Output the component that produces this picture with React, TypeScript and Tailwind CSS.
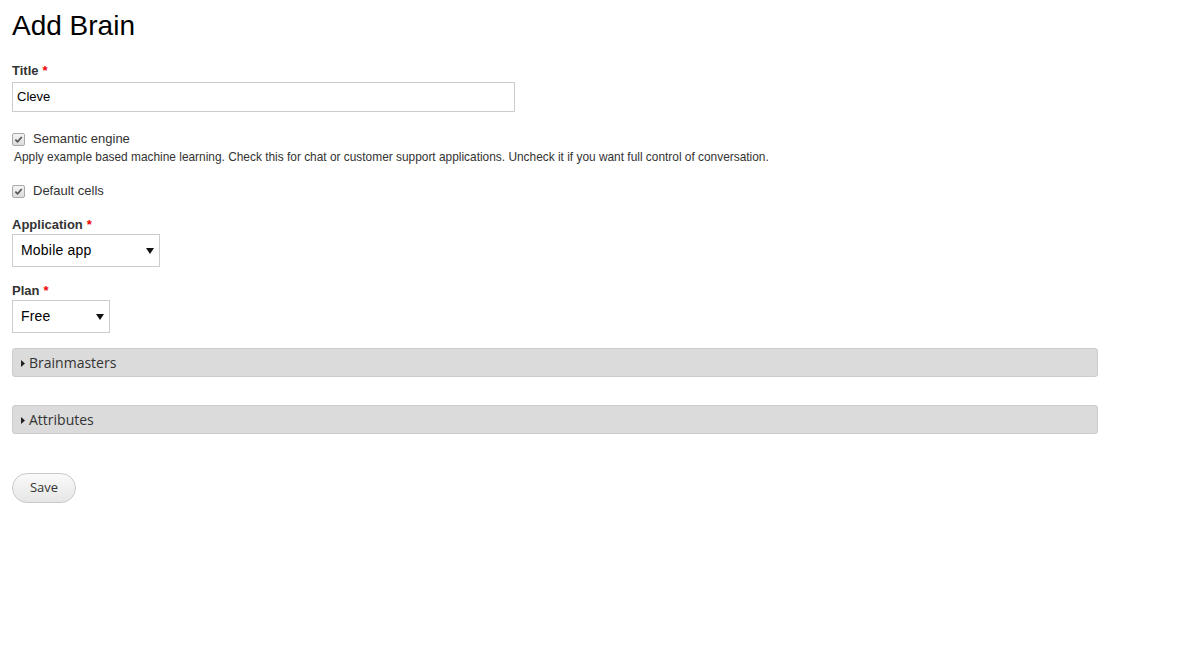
import { useState } from 'react'

function Required() {
  return <span className="ml-1 text-[#e00]">*</span>
}

function CheckField({ label, checked }: { label: string; checked: boolean }) {
  const [on, setOn] = useState(checked)
  return (
    <label className="flex h-[16px] items-center text-[13px] text-[#333]">
      <span
        onClick={() => setOn(!on)}
        className="flex h-[13px] w-[13px] items-center justify-center rounded-[2px] border border-[#a9a9a9] bg-gradient-to-b from-[#f4f4f4] to-[#dcdcdc]"
      >
        {on && (
          <svg viewBox="0 0 10 10" className="h-[9px] w-[9px]">
            <path d="M1.5 5.2 L4 7.6 L8.6 2.2" fill="none" stroke="#555" strokeWidth="1.9" />
          </svg>
        )}
      </span>
      <span className="ml-[8px]">{label}</span>
    </label>
  )
}

function SelectBox({ value, width }: { value: string; width: string }) {
  return (
    <div
      className={`flex h-[33px] items-center justify-between border border-[#ccc] bg-white pl-[8px] pr-[5px] text-[14px] tracking-[0.2px] text-black ${width}`}
    >
      <span>{value}</span>
      <svg viewBox="0 0 8 6" className="h-[6px] w-[8px]">
        <path d="M0 0 H8 L4 6 Z" fill="#111" />
      </svg>
    </div>
  )
}

function Fieldset({ title }: { title: string }) {
  return (
    <div className="flex h-[29px] w-[1086px] items-center rounded-[3px] border border-[#ccc] bg-[#dbdbdb] pl-[8px] text-[14px] text-[#333] font-['Open_Sans',sans-serif]">
      <svg viewBox="0 0 4 7" className="mr-[4px] mt-[1px] h-[7px] w-[4px]">
        <path d="M0 0 L4 3.5 L0 7 Z" fill="#222" />
      </svg>
      <span>{title}</span>
    </div>
  )
}

export default function App() {
  return (
    <div className="min-h-[648px] bg-white px-[12px] pt-[10px] font-['Liberation_Sans',Arial,sans-serif] text-[#333]">
      <h1 className="text-[28px] leading-[32px] font-normal text-black">Add Brain</h1>

      <div className="mt-[21px]">
        <div className="text-[13px] font-bold leading-[16px] text-[#333]">
          Title<Required />
        </div>
        <div className="mt-[3px] flex h-[30px] w-[503px] items-center border border-[#ccc] bg-white px-[4px] text-[13px] text-black">
          Cleve
        </div>
      </div>

      <div className="mt-[19px]">
        <CheckField label="Semantic engine" checked />
        <p className="mt-[3px] pl-[2px] text-[11.9px] leading-[15px] text-[#333]">
          Apply example based machine learning. Check this for chat or customer support applications. Uncheck it if you want full control of conversation.
        </p>
      </div>

      <div className="mt-[18px]">
        <CheckField label="Default cells" checked />
      </div>

      <div className="mt-[18px]">
        <div className="text-[13px] font-bold leading-[16px] text-[#333]">
          Application<Required />
        </div>
        <div className="mt-[1px]">
          <SelectBox value="Mobile app" width="w-[148px]" />
        </div>
      </div>

      <div className="mt-[16px]">
        <div className="text-[13px] font-bold leading-[16px] text-[#333]">
          Plan<Required />
        </div>
        <div className="mt-[1px]">
          <SelectBox value="Free" width="w-[98px]" />
        </div>
      </div>

      <div className="mt-[15px] flex flex-col gap-[28px]">
        <Fieldset title="Brainmasters" />
        <Fieldset title="Attributes" />
      </div>

      <button className="mt-[39px] h-[30px] w-[64px] rounded-full border border-[#c8c8c8] bg-gradient-to-b from-[#fafafa] to-[#e6e6e6] text-[13px] text-[#333] font-['Open_Sans',sans-serif]">
        Save
      </button>
    </div>
  )
}
